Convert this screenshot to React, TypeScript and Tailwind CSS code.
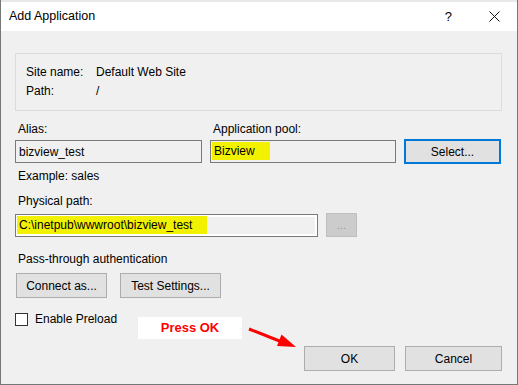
export default function App() {
  const font = "font-['Liberation_Sans',Arial,sans-serif]";
  const btn =
    'flex items-center justify-center h-[25px] bg-[#e1e1e1] border border-[#adadad] text-[12px] text-black';

  return (
    <div
      className={`relative w-[518px] h-[385px] bg-[#f0f0f0] border-x border-b border-[#777777] ${font} text-[12px] text-black overflow-hidden`}
    >
      {/* Title bar */}
      <div className="flex items-center h-[31px] bg-white pl-[8px] pr-[17px] border-t-2 border-[#e8e8e8]">
        <span className="text-[12.5px]">Add Application</span>
        <span className="ml-auto text-[13px] leading-none">?</span>
        <svg className="ml-[37px]" width="11" height="11" viewBox="0 0 11 11">
          <path d="M0.5 0.5 L10.5 10.5 M10.5 0.5 L0.5 10.5" stroke="#111" strokeWidth="1" fill="none" />
        </svg>
      </div>

      <div className="pl-[14px]">
        {/* Site info group */}
        <div className="mt-[22px] w-[487px] h-[58px] border border-[#dcdcdc] pt-[9px] pl-[10px]">
          <div className="grid grid-cols-[70px_1fr] leading-[19px]">
            <span>Site name:</span>
            <span>Default Web Site</span>
            <span>Path:</span>
            <span>/</span>
          </div>
        </div>

        {/* Alias / Application pool */}
        <div className="flex gap-[8px] mt-[11px] leading-[15px]">
          <span className="w-[187px] pl-[3px]">Alias:</span>
          <span className="w-[186px] pl-[3px]">Application pool:</span>
        </div>
        <div className="flex items-center gap-[8px] mt-[2px]">
          <div className="w-[187px] h-[23px] border border-[#7a7a7a] flex items-center pl-[3px]">
            bizview_test
          </div>
          <div className="w-[186px] h-[23px] border border-[#7a7a7a] pl-px pt-px">
            <div className="w-[58px] h-[18px] bg-[#f2f200] flex items-center pl-[2px]">Bizview</div>
          </div>
          <button className="flex items-center justify-center w-[97px] h-[25px] bg-[#e1e1e1] border-2 border-[#0078d7] text-[12px]">
            Select...
          </button>
        </div>
        <div className="mt-[5px] pl-[3px] leading-[15px]">Example: sales</div>

        {/* Physical path */}
        <div className="mt-[10px] pl-[3px] leading-[15px]">Physical path:</div>
        <div className="flex items-center gap-[8px] mt-[4px]">
          <div className="w-[303px] h-[23px] border border-[#7a7a7a] shadow-[inset_0_0_0_2px_#ffffff] flex items-center pl-px">
            <div className="w-[190px] h-[18px] bg-[#f2f200] flex items-center pl-[2px]">
              C:\inetpub\wwwroot\bizview_test
            </div>
          </div>
          <div className="w-[31px] h-[24px] bg-[#cccccc] border border-[#bfbfbf] flex items-center justify-center text-[11px] text-[#999999]">
            ...
          </div>
        </div>

        {/* Pass-through authentication */}
        <div className="mt-[15px] pl-[3px] leading-[15px]">Pass-through authentication</div>
        <div className="flex gap-[13px] mt-[6px] pl-px">
          <button className={`${btn} w-[91px]`}>Connect as...</button>
          <button className={`${btn} w-[101px]`}>Test Settings...</button>
        </div>

        {/* Enable preload */}
        <div className="flex items-center gap-[7px] mt-[15px] h-[13px]">
          <div className="w-[13px] h-[13px] bg-white border border-[#333333]" />
          <span className="leading-[13px]">Enable Preload</span>
        </div>

        {/* Dialog buttons */}
        <div className="flex justify-end gap-[10px] mt-[20px] pr-[15px]">
          <button className={`${btn} w-[91px]`}>OK</button>
          <button className={`${btn} w-[97px]`}>Cancel</button>
        </div>
      </div>

      {/* Annotation */}
      <div className="absolute left-[137px] top-[317px] w-[104px] h-[22px] bg-white flex items-center justify-center font-bold text-[13px] text-[#ff0000]">
        Press OK
      </div>
      <svg className="absolute left-0 top-0" width="518" height="385" viewBox="0 0 518 385">
        <line x1="248" y1="329" x2="281" y2="342" stroke="#ff0000" strokeWidth="3" />
        <polygon points="295,347 280.5,334.5 276,346" fill="#ff0000" />
      </svg>
    </div>
  );
}
